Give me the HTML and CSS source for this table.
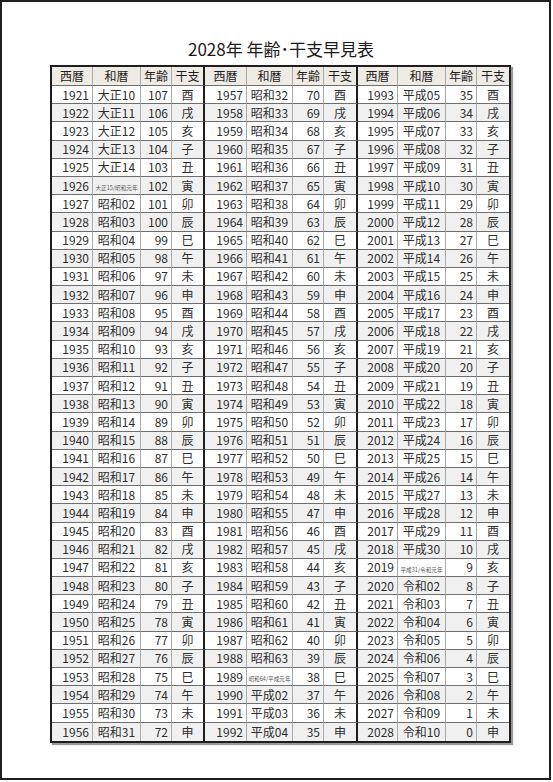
FILE: index.html
```html
<!DOCTYPE html>
<html lang="ja">
<head>
<meta charset="utf-8">
<title>2028年 年齢・干支早見表</title>
<link rel="stylesheet" href="styles.css">
</head>
<body>
<div class="sheet">
  <h1 class="title">2028年 年齢･干支早見表</h1>
  <table class="chart">
    <colgroup>
      <col class="c1"><col class="c2"><col class="c3"><col class="c4">
      <col class="c5"><col class="c6"><col class="c7"><col class="c8">
      <col class="c9"><col class="c10"><col class="c11"><col class="c12">
    </colgroup>
    <thead>
      <tr>
        <th>西暦</th><th>和暦</th><th>年齢</th><th class="g-end">干支</th>
        <th>西暦</th><th>和暦</th><th>年齢</th><th class="g-end">干支</th>
        <th>西暦</th><th>和暦</th><th>年齢</th><th class="last">干支</th>
      </tr>
    </thead>
    <tbody>
      <tr><td class="yr">1921</td><td class="era">大正10</td><td class="age">107</td><td class="eto g-end">酉</td><td class="yr">1957</td><td class="era">昭和32</td><td class="age">70</td><td class="eto g-end">酉</td><td class="yr">1993</td><td class="era">平成05</td><td class="age">35</td><td class="eto last">酉</td></tr>
      <tr class="alt"><td class="yr">1922</td><td class="era">大正11</td><td class="age">106</td><td class="eto g-end">戌</td><td class="yr">1958</td><td class="era">昭和33</td><td class="age">69</td><td class="eto g-end">戌</td><td class="yr">1994</td><td class="era">平成06</td><td class="age">34</td><td class="eto last">戌</td></tr>
      <tr><td class="yr">1923</td><td class="era">大正12</td><td class="age">105</td><td class="eto g-end">亥</td><td class="yr">1959</td><td class="era">昭和34</td><td class="age">68</td><td class="eto g-end">亥</td><td class="yr">1995</td><td class="era">平成07</td><td class="age">33</td><td class="eto last">亥</td></tr>
      <tr class="alt"><td class="yr">1924</td><td class="era">大正13</td><td class="age">104</td><td class="eto g-end">子</td><td class="yr">1960</td><td class="era">昭和35</td><td class="age">67</td><td class="eto g-end">子</td><td class="yr">1996</td><td class="era">平成08</td><td class="age">32</td><td class="eto last">子</td></tr>
      <tr><td class="yr">1925</td><td class="era">大正14</td><td class="age">103</td><td class="eto g-end">丑</td><td class="yr">1961</td><td class="era">昭和36</td><td class="age">66</td><td class="eto g-end">丑</td><td class="yr">1997</td><td class="era">平成09</td><td class="age">31</td><td class="eto last">丑</td></tr>
      <tr class="alt"><td class="yr">1926</td><td class="era"><span class="tiny">大正15/昭和元年</span></td><td class="age">102</td><td class="eto g-end">寅</td><td class="yr">1962</td><td class="era">昭和37</td><td class="age">65</td><td class="eto g-end">寅</td><td class="yr">1998</td><td class="era">平成10</td><td class="age">30</td><td class="eto last">寅</td></tr>
      <tr><td class="yr">1927</td><td class="era">昭和02</td><td class="age">101</td><td class="eto g-end">卯</td><td class="yr">1963</td><td class="era">昭和38</td><td class="age">64</td><td class="eto g-end">卯</td><td class="yr">1999</td><td class="era">平成11</td><td class="age">29</td><td class="eto last">卯</td></tr>
      <tr class="alt"><td class="yr">1928</td><td class="era">昭和03</td><td class="age">100</td><td class="eto g-end">辰</td><td class="yr">1964</td><td class="era">昭和39</td><td class="age">63</td><td class="eto g-end">辰</td><td class="yr">2000</td><td class="era">平成12</td><td class="age">28</td><td class="eto last">辰</td></tr>
      <tr><td class="yr">1929</td><td class="era">昭和04</td><td class="age">99</td><td class="eto g-end">巳</td><td class="yr">1965</td><td class="era">昭和40</td><td class="age">62</td><td class="eto g-end">巳</td><td class="yr">2001</td><td class="era">平成13</td><td class="age">27</td><td class="eto last">巳</td></tr>
      <tr class="alt"><td class="yr">1930</td><td class="era">昭和05</td><td class="age">98</td><td class="eto g-end">午</td><td class="yr">1966</td><td class="era">昭和41</td><td class="age">61</td><td class="eto g-end">午</td><td class="yr">2002</td><td class="era">平成14</td><td class="age">26</td><td class="eto last">午</td></tr>
      <tr><td class="yr">1931</td><td class="era">昭和06</td><td class="age">97</td><td class="eto g-end">未</td><td class="yr">1967</td><td class="era">昭和42</td><td class="age">60</td><td class="eto g-end">未</td><td class="yr">2003</td><td class="era">平成15</td><td class="age">25</td><td class="eto last">未</td></tr>
      <tr class="alt"><td class="yr">1932</td><td class="era">昭和07</td><td class="age">96</td><td class="eto g-end">申</td><td class="yr">1968</td><td class="era">昭和43</td><td class="age">59</td><td class="eto g-end">申</td><td class="yr">2004</td><td class="era">平成16</td><td class="age">24</td><td class="eto last">申</td></tr>
      <tr><td class="yr">1933</td><td class="era">昭和08</td><td class="age">95</td><td class="eto g-end">酉</td><td class="yr">1969</td><td class="era">昭和44</td><td class="age">58</td><td class="eto g-end">酉</td><td class="yr">2005</td><td class="era">平成17</td><td class="age">23</td><td class="eto last">酉</td></tr>
      <tr class="alt"><td class="yr">1934</td><td class="era">昭和09</td><td class="age">94</td><td class="eto g-end">戌</td><td class="yr">1970</td><td class="era">昭和45</td><td class="age">57</td><td class="eto g-end">戌</td><td class="yr">2006</td><td class="era">平成18</td><td class="age">22</td><td class="eto last">戌</td></tr>
      <tr><td class="yr">1935</td><td class="era">昭和10</td><td class="age">93</td><td class="eto g-end">亥</td><td class="yr">1971</td><td class="era">昭和46</td><td class="age">56</td><td class="eto g-end">亥</td><td class="yr">2007</td><td class="era">平成19</td><td class="age">21</td><td class="eto last">亥</td></tr>
      <tr class="alt"><td class="yr">1936</td><td class="era">昭和11</td><td class="age">92</td><td class="eto g-end">子</td><td class="yr">1972</td><td class="era">昭和47</td><td class="age">55</td><td class="eto g-end">子</td><td class="yr">2008</td><td class="era">平成20</td><td class="age">20</td><td class="eto last">子</td></tr>
      <tr><td class="yr">1937</td><td class="era">昭和12</td><td class="age">91</td><td class="eto g-end">丑</td><td class="yr">1973</td><td class="era">昭和48</td><td class="age">54</td><td class="eto g-end">丑</td><td class="yr">2009</td><td class="era">平成21</td><td class="age">19</td><td class="eto last">丑</td></tr>
      <tr class="alt"><td class="yr">1938</td><td class="era">昭和13</td><td class="age">90</td><td class="eto g-end">寅</td><td class="yr">1974</td><td class="era">昭和49</td><td class="age">53</td><td class="eto g-end">寅</td><td class="yr">2010</td><td class="era">平成22</td><td class="age">18</td><td class="eto last">寅</td></tr>
      <tr><td class="yr">1939</td><td class="era">昭和14</td><td class="age">89</td><td class="eto g-end">卯</td><td class="yr">1975</td><td class="era">昭和50</td><td class="age">52</td><td class="eto g-end">卯</td><td class="yr">2011</td><td class="era">平成23</td><td class="age">17</td><td class="eto last">卯</td></tr>
      <tr class="alt"><td class="yr">1940</td><td class="era">昭和15</td><td class="age">88</td><td class="eto g-end">辰</td><td class="yr">1976</td><td class="era">昭和51</td><td class="age">51</td><td class="eto g-end">辰</td><td class="yr">2012</td><td class="era">平成24</td><td class="age">16</td><td class="eto last">辰</td></tr>
      <tr><td class="yr">1941</td><td class="era">昭和16</td><td class="age">87</td><td class="eto g-end">巳</td><td class="yr">1977</td><td class="era">昭和52</td><td class="age">50</td><td class="eto g-end">巳</td><td class="yr">2013</td><td class="era">平成25</td><td class="age">15</td><td class="eto last">巳</td></tr>
      <tr class="alt"><td class="yr">1942</td><td class="era">昭和17</td><td class="age">86</td><td class="eto g-end">午</td><td class="yr">1978</td><td class="era">昭和53</td><td class="age">49</td><td class="eto g-end">午</td><td class="yr">2014</td><td class="era">平成26</td><td class="age">14</td><td class="eto last">午</td></tr>
      <tr><td class="yr">1943</td><td class="era">昭和18</td><td class="age">85</td><td class="eto g-end">未</td><td class="yr">1979</td><td class="era">昭和54</td><td class="age">48</td><td class="eto g-end">未</td><td class="yr">2015</td><td class="era">平成27</td><td class="age">13</td><td class="eto last">未</td></tr>
      <tr class="alt"><td class="yr">1944</td><td class="era">昭和19</td><td class="age">84</td><td class="eto g-end">申</td><td class="yr">1980</td><td class="era">昭和55</td><td class="age">47</td><td class="eto g-end">申</td><td class="yr">2016</td><td class="era">平成28</td><td class="age">12</td><td class="eto last">申</td></tr>
      <tr><td class="yr">1945</td><td class="era">昭和20</td><td class="age">83</td><td class="eto g-end">酉</td><td class="yr">1981</td><td class="era">昭和56</td><td class="age">46</td><td class="eto g-end">酉</td><td class="yr">2017</td><td class="era">平成29</td><td class="age">11</td><td class="eto last">酉</td></tr>
      <tr class="alt"><td class="yr">1946</td><td class="era">昭和21</td><td class="age">82</td><td class="eto g-end">戌</td><td class="yr">1982</td><td class="era">昭和57</td><td class="age">45</td><td class="eto g-end">戌</td><td class="yr">2018</td><td class="era">平成30</td><td class="age">10</td><td class="eto last">戌</td></tr>
      <tr><td class="yr">1947</td><td class="era">昭和22</td><td class="age">81</td><td class="eto g-end">亥</td><td class="yr">1983</td><td class="era">昭和58</td><td class="age">44</td><td class="eto g-end">亥</td><td class="yr">2019</td><td class="era"><span class="tiny">平成31/令和元年</span></td><td class="age">9</td><td class="eto last">亥</td></tr>
      <tr class="alt"><td class="yr">1948</td><td class="era">昭和23</td><td class="age">80</td><td class="eto g-end">子</td><td class="yr">1984</td><td class="era">昭和59</td><td class="age">43</td><td class="eto g-end">子</td><td class="yr">2020</td><td class="era">令和02</td><td class="age">8</td><td class="eto last">子</td></tr>
      <tr><td class="yr">1949</td><td class="era">昭和24</td><td class="age">79</td><td class="eto g-end">丑</td><td class="yr">1985</td><td class="era">昭和60</td><td class="age">42</td><td class="eto g-end">丑</td><td class="yr">2021</td><td class="era">令和03</td><td class="age">7</td><td class="eto last">丑</td></tr>
      <tr class="alt"><td class="yr">1950</td><td class="era">昭和25</td><td class="age">78</td><td class="eto g-end">寅</td><td class="yr">1986</td><td class="era">昭和61</td><td class="age">41</td><td class="eto g-end">寅</td><td class="yr">2022</td><td class="era">令和04</td><td class="age">6</td><td class="eto last">寅</td></tr>
      <tr><td class="yr">1951</td><td class="era">昭和26</td><td class="age">77</td><td class="eto g-end">卯</td><td class="yr">1987</td><td class="era">昭和62</td><td class="age">40</td><td class="eto g-end">卯</td><td class="yr">2023</td><td class="era">令和05</td><td class="age">5</td><td class="eto last">卯</td></tr>
      <tr class="alt"><td class="yr">1952</td><td class="era">昭和27</td><td class="age">76</td><td class="eto g-end">辰</td><td class="yr">1988</td><td class="era">昭和63</td><td class="age">39</td><td class="eto g-end">辰</td><td class="yr">2024</td><td class="era">令和06</td><td class="age">4</td><td class="eto last">辰</td></tr>
      <tr><td class="yr">1953</td><td class="era">昭和28</td><td class="age">75</td><td class="eto g-end">巳</td><td class="yr">1989</td><td class="era"><span class="tiny">昭和64/平成元年</span></td><td class="age">38</td><td class="eto g-end">巳</td><td class="yr">2025</td><td class="era">令和07</td><td class="age">3</td><td class="eto last">巳</td></tr>
      <tr class="alt"><td class="yr">1954</td><td class="era">昭和29</td><td class="age">74</td><td class="eto g-end">午</td><td class="yr">1990</td><td class="era">平成02</td><td class="age">37</td><td class="eto g-end">午</td><td class="yr">2026</td><td class="era">令和08</td><td class="age">2</td><td class="eto last">午</td></tr>
      <tr><td class="yr">1955</td><td class="era">昭和30</td><td class="age">73</td><td class="eto g-end">未</td><td class="yr">1991</td><td class="era">平成03</td><td class="age">36</td><td class="eto g-end">未</td><td class="yr">2027</td><td class="era">令和09</td><td class="age">1</td><td class="eto last">未</td></tr>
      <tr class="alt last-row"><td class="yr">1956</td><td class="era">昭和31</td><td class="age">72</td><td class="eto g-end">申</td><td class="yr">1992</td><td class="era">平成04</td><td class="age">35</td><td class="eto g-end">申</td><td class="yr">2028</td><td class="era">令和10</td><td class="age">0</td><td class="eto last">申</td></tr>
    </tbody>
  </table>
</div>
</body>
</html>
```

FILE: styles.css
```css
body {
  margin: 0;
  background: #ffffff;
  font-family: "Noto Sans CJK JP", "Noto Sans", sans-serif;
  color: #2e2e2e;
}

.sheet {
  box-sizing: border-box;
  width: 551px;
  height: 780px;
  border: 2px solid #1e1e1e;
  padding-top: 37px;
}

.title {
  margin: 0 0 0 48px;
  width: 462px;
  text-align: center;
  font-size: 17px;
  font-weight: normal;
  line-height: 20px;
  color: #1a1a1a;
}

.chart {
  margin: 6px 0 0 48px;
  border-collapse: separate;
  border-spacing: 0;
  table-layout: fixed;
  width: 461px;
  border: 2px solid #1e1e1e;
  box-shadow: 2px 2px 1px #9a9a9a;
  font-size: 12px;
  line-height: 1;
}

.c1 { width: 41px; }
.c2 { width: 48px; }
.c3 { width: 31px; }
.c4 { width: 33px; }
.c5 { width: 42px; }
.c6 { width: 46px; }
.c7 { width: 31px; }
.c8 { width: 34px; }
.c9 { width: 40px; }
.c10 { width: 48px; }
.c11 { width: 31px; }
.c12 { width: 32px; }

.chart th,
.chart td {
  box-sizing: border-box;
  padding: 0 3px;
  border-right: 1px solid #aaaaaa;
  border-bottom: 1px solid #6e6e6e;
  height: 18.2px;
  white-space: nowrap;
  overflow: hidden;
  vertical-align: middle;
}

.chart th {
  height: 19px;
  background: #eeeae4;
  font-weight: normal;
  text-align: center;
  color: #1e1e1e;
}

.chart .g-end {
  border-right: 2px solid #1e1e1e;
}

.chart .last {
  border-right: none;
}

.chart .last-row td {
  border-bottom: none;
}

.chart tr.alt td {
  background: #f0f0f0;
}

.yr,
.age {
  text-align: right;
}

.era,
.eto {
  text-align: center;
}

.chart .era {
  padding: 0 1px;
}

.tiny {
  font-size: 5.6px;
  color: #555555;
  letter-spacing: 0;
}
```
